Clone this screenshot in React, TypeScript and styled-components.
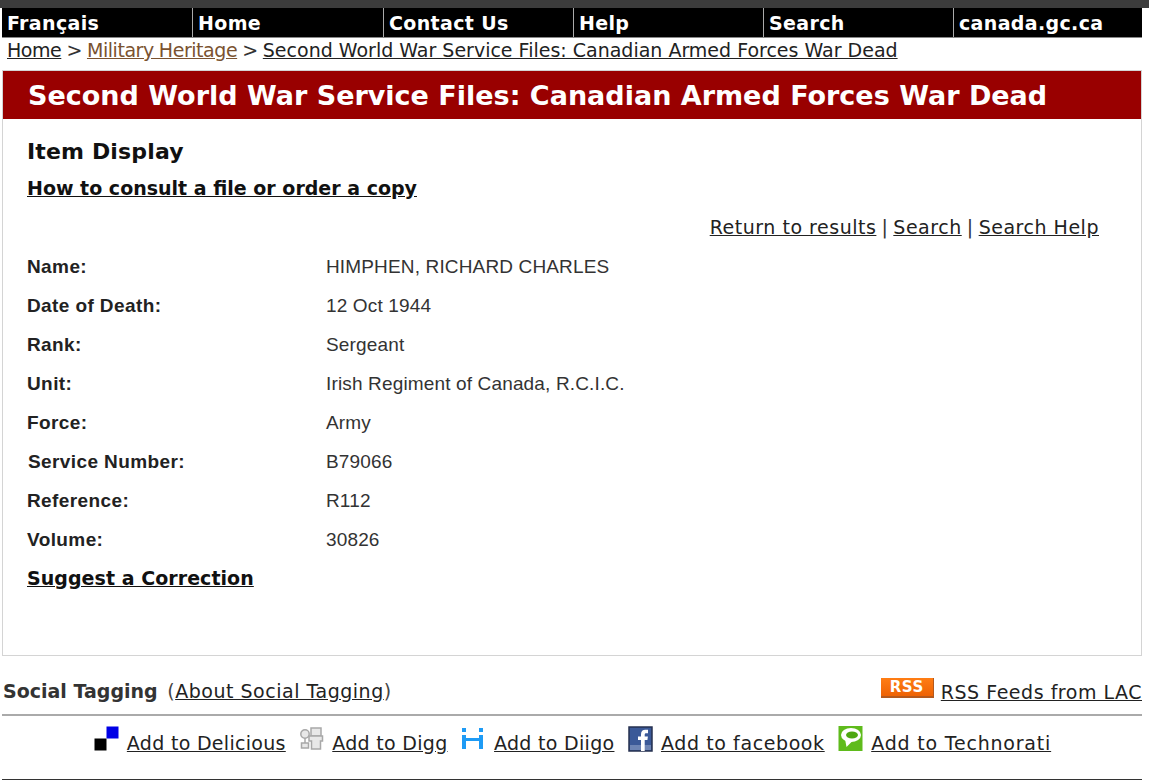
import React from 'react';
import styled, { createGlobalStyle } from 'styled-components';

const GlobalStyle = createGlobalStyle`
  html, body {
    margin: 0;
    padding: 0;
    background: #fff;
    overflow: hidden;
  }
  body {
    font-family: "DejaVu Sans", Verdana, sans-serif;
    color: #222;
  }
`;

const Page = styled.div`
  width: 1149px;
  height: 780px;
  overflow: hidden;
  box-sizing: border-box;
  padding-top: 8px;
  background: linear-gradient(#3c3c3c 8px, #fff 8px);
`;

const Nav = styled.nav`
  display: grid;
  grid-template-columns: 190px 191px 190px 190px 190px 189px;
  height: 30px;
  margin: 0 7px 0 2px;
  background: #000;
  border-bottom: 1px solid #888;
  box-sizing: border-box;
`;

const NavItem = styled.a<{ $first?: boolean }>`
  display: flex;
  align-items: center;
  padding: 1px 0 0 5px;
  border-left: ${(p) => (p.$first ? 'none' : '1px solid #aaa')};
  color: #fff;
  font-size: 19px;
  font-weight: 700;
  letter-spacing: 0.35px;
`;

const Crumbs = styled.div`
  height: 32px;
  padding: 1px 0 0 7px;
  box-sizing: border-box;
  font-size: 19px;
  line-height: 22px;
  letter-spacing: -0.45px;
  word-spacing: -0.5px;
  color: #333;
`;

const TextLink = styled.a<{ $tone?: string; $spacing?: number }>`
  color: ${(p) => p.$tone ?? '#222'};
  text-decoration: underline;
  ${(p) => (p.$spacing !== undefined ? `letter-spacing: ${p.$spacing}px; word-spacing: 0;` : '')}
`;

const Panel = styled.main`
  width: 1140px;
  height: 586px;
  margin-left: 2px;
  box-sizing: border-box;
  border: 1px solid #d4d4d4;
`;

const Banner = styled.h1`
  margin: 0;
  height: 48px;
  padding: 1px 0 0 25px;
  box-sizing: border-box;
  display: flex;
  align-items: center;
  background: #990000;
  color: #fff;
  font-size: 27px;
  font-weight: 700;
`;

const Body = styled.div`
  padding: 19px 42px 0 24px;
`;

const Heading = styled.h2`
  margin: 0;
  font-size: 22px;
  line-height: 28px;
  font-weight: 700;
  letter-spacing: 0.15px;
  color: #111;
`;

const BoldLink = styled.a`
  display: block;
  font-size: 19px;
  line-height: 24px;
  font-weight: 700;
  color: #111;
  text-decoration: underline;
`;

const HowTo = styled(BoldLink)`
  margin-top: 10px;
`;

const Tools = styled.div`
  display: flex;
  justify-content: flex-end;
  gap: 5px;
  margin-top: 15px;
  font-size: 19px;
  line-height: 24px;
  letter-spacing: 0.52px;
  color: #333;
`;

const Fields = styled.dl`
  display: grid;
  grid-template-columns: 299px 1fr;
  grid-auto-rows: 39px;
  align-items: center;
  margin: 8px 0 0;
  font-family: "Liberation Sans", Arial, sans-serif;
  font-size: 19px;
`;

const Term = styled.dt<{ $nudge?: boolean }>`
  font-weight: 700;
  letter-spacing: 0.4px;
  color: #222;
  padding-left: ${(p) => (p.$nudge ? '1px' : '0')};
`;

const Detail = styled.dd`
  margin: 0;
  letter-spacing: 0.15px;
  color: #333;
`;

const Correction = styled(BoldLink)`
  margin-top: 7px;
  letter-spacing: 0.05px;
`;

const TagBar = styled.div`
  display: flex;
  justify-content: space-between;
  align-items: center;
  width: 1140px;
  height: 60px;
  margin-left: 2px;
  box-sizing: border-box;
  padding: 12px 0 0 1px;
  border-bottom: 2px solid #aaa;
  font-size: 19px;
  letter-spacing: 0.52px;
  color: #444;
`;

const TagTitle = styled.strong`
  margin-right: 3px;
  letter-spacing: 0;
  color: #333;
`;

const Feed = styled.div`
  display: flex;
  align-items: center;
  gap: 7px;
`;

const FeedLink = styled(TextLink)`
  margin-top: 2px;
`;

const RssBadge = styled.span`
  width: 53px;
  height: 20px;
  margin-top: -6px;
  box-sizing: border-box;
  display: flex;
  align-items: center;
  justify-content: center;
  background: linear-gradient(#ff7d14, #ee6204);
  border-right: 1px solid #b5591c;
  border-bottom: 2px solid #b5591c;
  color: #fff;
  font-size: 15px;
  font-weight: 700;
  letter-spacing: 0.6px;
`;

const Share = styled.div`
  display: flex;
  justify-content: center;
  gap: 13.5px;
  width: 1140px;
  height: 64px;
  margin-left: 2px;
  box-sizing: border-box;
  padding: 10px 0 0 1px;
  border-bottom: 1px solid #333;
  font-size: 19px;
  line-height: 34px;
  letter-spacing: 0.3px;
`;

const ShareItem = styled.div`
  display: flex;
  align-items: flex-start;
  gap: 8px;
`;

const ShareIcon = styled.svg`
  width: 25px;
  height: 26px;
  flex: none;
`;

const fields = [
  ['Name:', 'HIMPHEN, RICHARD CHARLES'],
  ['Date of Death:', '12 Oct 1944'],
  ['Rank:', 'Sergeant'],
  ['Unit:', 'Irish Regiment of Canada, R.C.I.C.'],
  ['Force:', 'Army'],
  ['Service Number:', 'B79066'],
  ['Reference:', 'R112'],
  ['Volume:', '30826'],
];

const navItems = ['Français', 'Home', 'Contact Us', 'Help', 'Search', 'canada.gc.ca'];

const DeliciousIcon = () => (
  <ShareIcon viewBox="0 0 25 26">
    <rect x="12.500" y="0.500" width="12" height="12" fill="#0000e6" />
    <rect x="0.500" y="12.500" width="12" height="12" fill="#000" />
  </ShareIcon>
);

const DiggIcon = () => (
  <ShareIcon viewBox="0 0 25 26">
    <g fill="#e8e8e8" stroke="#a8a8a8" strokeWidth="1.500">
      <circle cx="6" cy="8" r="4.200" />
      <path d="M6 12v5" />
      <rect x="2.500" y="17" width="7" height="5" />
      <rect x="12" y="2" width="10" height="8" />
      <path d="M10 10h13.500v5h-2v8h-9v-8h-2.500z" />
    </g>
  </ShareIcon>
);

const DiigoIcon = () => (
  <ShareIcon viewBox="0 0 25 26">
    <g fill="#1e9bf5">
      <rect x="1" y="2" width="4" height="4" />
      <rect x="1" y="9" width="4" height="14" />
      <rect x="5" y="12" width="13" height="3" />
      <rect x="18" y="9" width="4" height="14" />
      <rect x="18" y="2" width="4" height="4" />
    </g>
  </ShareIcon>
);

const FacebookIcon = () => (
  <ShareIcon viewBox="0 0 25 26">
    <rect x="1" y="1" width="23" height="24" fill="#3b5998" stroke="#26304f" strokeWidth="1.500" />
    <rect x="2" y="19" width="21" height="5" fill="#6d84b4" />
    <path d="M13 25v-11h-3v-3.600h3V8.200c0-3 1.800-4.400 4.200-4.400h2.800v3.500h-1.800c-1.200 0-1.500.6-1.500 1.500v1.600h3.200l-.5 3.600h-2.700v11z" fill="#fff" />
  </ShareIcon>
);

const TechnoratiIcon = () => (
  <ShareIcon viewBox="0 0 25 26">
    <rect x="0.500" y="0" width="24" height="25" fill="#5fbb1c" />
    <ellipse cx="13" cy="9" rx="10" ry="7" fill="#fff" />
    <ellipse cx="14" cy="9" rx="6" ry="3.500" fill="#4ea812" />
    <path d="M7 13l1.500 8 6-6z" fill="#fff" />
  </ShareIcon>
);

export default function App() {
  return (
    <Page>
      <GlobalStyle />
      <Nav>
        {navItems.map((item, i) => (
          <NavItem key={item} $first={i === 0}>
            {item}
          </NavItem>
        ))}
      </Nav>
      <Crumbs>
        <TextLink>Home</TextLink> &gt; <TextLink $tone="#7a5230">Military Heritage</TextLink> &gt;{' '}
        <TextLink $spacing={0}>Second World War Service Files: Canadian Armed Forces War Dead</TextLink>
      </Crumbs>
      <Panel>
        <Banner>Second World War Service Files: Canadian Armed Forces War Dead</Banner>
        <Body>
          <Heading>Item Display</Heading>
          <HowTo>How to consult a file or order a copy</HowTo>
          <Tools>
            <TextLink>Return to results</TextLink>|<TextLink>Search</TextLink>|<TextLink>Search Help</TextLink>
          </Tools>
          <Fields>
            {fields.map(([term, value]) => (
              <React.Fragment key={term}>
                <Term $nudge={term === 'Service Number:'}>{term}</Term>
                <Detail>{value}</Detail>
              </React.Fragment>
            ))}
          </Fields>
          <Correction>Suggest a Correction</Correction>
        </Body>
      </Panel>
      <TagBar>
        <span>
          <TagTitle>Social Tagging</TagTitle> (<TextLink>About Social Tagging</TextLink>)
        </span>
        <Feed>
          <RssBadge>RSS</RssBadge>
          <FeedLink>RSS Feeds from LAC</FeedLink>
        </Feed>
      </TagBar>
      <Share>
        <ShareItem>
          <DeliciousIcon />
          <TextLink>Add to Delicious</TextLink>
        </ShareItem>
        <ShareItem>
          <DiggIcon />
          <TextLink>Add to Digg</TextLink>
        </ShareItem>
        <ShareItem>
          <DiigoIcon />
          <TextLink>Add to Diigo</TextLink>
        </ShareItem>
        <ShareItem>
          <FacebookIcon />
          <TextLink $spacing={0.6}>Add to facebook</TextLink>
        </ShareItem>
        <ShareItem>
          <TechnoratiIcon />
          <TextLink $spacing={0.8}>Add to Technorati</TextLink>
        </ShareItem>
      </Share>
    </Page>
  );
}
